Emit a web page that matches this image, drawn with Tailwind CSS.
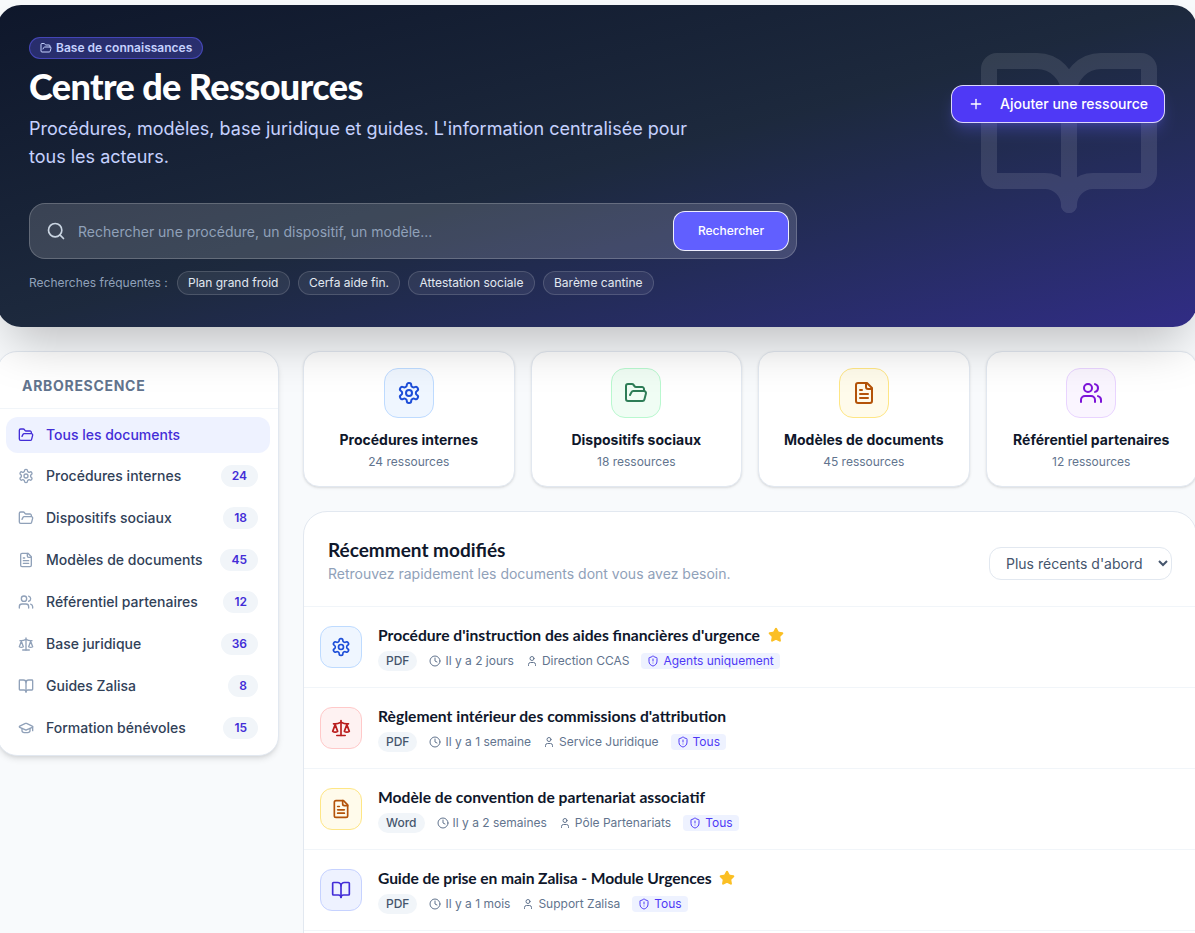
<!DOCTYPE html>
<html lang="fr">
<head>
<meta charset="utf-8">
<title>Centre de Ressources</title>
<script src="https://cdn.jsdelivr.net/npm/@tailwindcss/browser@4"></script>
</head>
<body class="bg-slate-50 font-['Inter',sans-serif] overflow-hidden">
<svg class="hidden">
<symbol id="folder" viewBox="0 0 24 24" fill="none" stroke="currentColor" stroke-width="2" stroke-linecap="round" stroke-linejoin="round"><path d="m6 14 1.5-2.9A2 2 0 0 1 9.24 10H20a2 2 0 0 1 1.94 2.5l-1.54 6a2 2 0 0 1-1.95 1.5H4a2 2 0 0 1-2-2V5a2 2 0 0 1 2-2h3.9a2 2 0 0 1 1.69.9l.81 1.2a2 2 0 0 0 1.67.9H18a2 2 0 0 1 2 2v2"/></symbol>
<symbol id="gear" viewBox="0 0 24 24" fill="none" stroke="currentColor" stroke-width="2" stroke-linecap="round" stroke-linejoin="round"><path d="M12.22 2h-.44a2 2 0 0 0-2 2v.18a2 2 0 0 1-1 1.73l-.43.25a2 2 0 0 1-2 0l-.15-.08a2 2 0 0 0-2.73.73l-.22.38a2 2 0 0 0 .73 2.73l.15.1a2 2 0 0 1 1 1.72v.51a2 2 0 0 1-1 1.74l-.15.09a2 2 0 0 0-.73 2.73l.22.38a2 2 0 0 0 2.73.73l.15-.08a2 2 0 0 1 2 0l.43.25a2 2 0 0 1 1 1.73V20a2 2 0 0 0 2 2h.44a2 2 0 0 0 2-2v-.18a2 2 0 0 1 1-1.73l.43-.25a2 2 0 0 1 2 0l.15.08a2 2 0 0 0 2.73-.73l.22-.39a2 2 0 0 0-.73-2.73l-.15-.08a2 2 0 0 1-1-1.74v-.5a2 2 0 0 1 1-1.74l.15-.09a2 2 0 0 0 .73-2.73l-.22-.38a2 2 0 0 0-2.73-.73l-.15.08a2 2 0 0 1-2 0l-.43-.25a2 2 0 0 1-1-1.73V4a2 2 0 0 0-2-2z"/><circle cx="12" cy="12" r="3"/></symbol>
<symbol id="file" viewBox="0 0 24 24" fill="none" stroke="currentColor" stroke-width="2" stroke-linecap="round" stroke-linejoin="round"><path d="M15 2H6a2 2 0 0 0-2 2v16a2 2 0 0 0 2 2h12a2 2 0 0 0 2-2V7Z"/><path d="M14 2v4a2 2 0 0 0 2 2h4"/><path d="M10 9H8"/><path d="M16 13H8"/><path d="M16 17H8"/></symbol>
<symbol id="users" viewBox="0 0 24 24" fill="none" stroke="currentColor" stroke-width="2" stroke-linecap="round" stroke-linejoin="round"><path d="M16 21v-2a4 4 0 0 0-4-4H6a4 4 0 0 0-4 4v2"/><circle cx="9" cy="7" r="4"/><path d="M22 21v-2a4 4 0 0 0-3-3.87"/><path d="M16 3.13a4 4 0 0 1 0 7.75"/></symbol>
<symbol id="scale" viewBox="0 0 24 24" fill="none" stroke="currentColor" stroke-width="2" stroke-linecap="round" stroke-linejoin="round"><path d="m16 16 3-8 3 8c-.87.65-1.92 1-3 1s-2.13-.35-3-1Z"/><path d="m2 16 3-8 3 8c-.87.65-1.92 1-3 1s-2.13-.35-3-1Z"/><path d="M7 21h10"/><path d="M12 3v18"/><path d="M3 7h2c2 0 5-1 7-2 2 1 5 2 7 2h2"/></symbol>
<symbol id="book" viewBox="0 0 24 24" fill="none" stroke="currentColor" stroke-width="2" stroke-linecap="round" stroke-linejoin="round"><path d="M12 7v14"/><path d="M3 18a1 1 0 0 1-1-1V4a1 1 0 0 1 1-1h5a4 4 0 0 1 4 4 4 4 0 0 1 4-4h5a1 1 0 0 1 1 1v13a1 1 0 0 1-1 1h-6a3 3 0 0 0-3 3 3 3 0 0 0-3-3z"/></symbol>
<symbol id="cap" viewBox="0 0 24 24" fill="none" stroke="currentColor" stroke-width="2" stroke-linecap="round" stroke-linejoin="round"><path d="M21.42 10.922a1 1 0 0 0-.019-1.838L12.83 5.18a2 2 0 0 0-1.66 0L2.6 9.08a1 1 0 0 0 0 1.832l8.57 3.908a2 2 0 0 0 1.66 0z"/><path d="M22 10v6"/><path d="M6 12.5V16a6 3 0 0 0 12 0v-3.5"/></symbol>
<symbol id="clock" viewBox="0 0 24 24" fill="none" stroke="currentColor" stroke-width="2" stroke-linecap="round" stroke-linejoin="round"><circle cx="12" cy="12" r="10"/><polyline points="12 6 12 12 16 14"/></symbol>
<symbol id="user" viewBox="0 0 24 24" fill="none" stroke="currentColor" stroke-width="2" stroke-linecap="round" stroke-linejoin="round"><path d="M19 21v-2a4 4 0 0 0-4-4H9a4 4 0 0 0-4 4v2"/><circle cx="12" cy="7" r="4"/></symbol>
<symbol id="shield" viewBox="0 0 24 24" fill="none" stroke="currentColor" stroke-width="2" stroke-linecap="round" stroke-linejoin="round"><path d="M20 13c0 5-3.5 7.5-7.66 8.95a1 1 0 0 1-.67-.01C7.5 20.5 4 18 4 13V6a1 1 0 0 1 1-1c2 0 4.5-1.2 6.24-2.72a1.17 1.17 0 0 1 1.52 0C14.51 3.81 17 5 19 5a1 1 0 0 1 1 1z"/><path d="M12 8v4"/><path d="M12 16h.01"/></symbol>
<symbol id="star" viewBox="0 0 24 24" fill="currentColor" stroke="currentColor" stroke-width="2" stroke-linecap="round" stroke-linejoin="round"><path d="M11.525 2.295a.53.53 0 0 1 .95 0l2.31 4.679a2.123 2.123 0 0 0 1.595 1.16l5.166.756a.53.53 0 0 1 .294.904l-3.736 3.638a2.123 2.123 0 0 0-.611 1.878l.882 5.14a.53.53 0 0 1-.771.56l-4.618-2.428a2.122 2.122 0 0 0-1.973 0L6.396 21.01a.53.53 0 0 1-.77-.56l.881-5.139a2.122 2.122 0 0 0-.611-1.879L2.16 9.795a.53.53 0 0 1 .294-.906l5.165-.755a2.122 2.122 0 0 0 1.597-1.16z"/></symbol>
</svg>

<div class="w-[1200px] h-[933px] ml-[-3px] pt-[5px] overflow-hidden">
  <!-- Hero -->
  <section class="relative h-[322px] rounded-3xl p-8 bg-linear-to-br from-slate-900 via-slate-800 to-indigo-900 shadow-2xl">
    <div class="absolute inset-0 overflow-hidden rounded-3xl pointer-events-none">
      <svg class="absolute right-8 top-8 w-48 h-48 text-white opacity-10"><use href="#book"/></svg>
    </div>
    <div class="relative flex items-center justify-between">
      <div>
        <span class="flex w-fit items-center gap-1 h-[22px] px-2.5 rounded-full border border-indigo-500/50 bg-indigo-500/30 text-xs font-semibold text-indigo-200"><svg class="w-3 h-3"><use href="#folder"/></svg>Base de connaissances</span>
        <h1 class="mt-[7px] font-['Lato',sans-serif] text-[36px] leading-10 font-black tracking-[-0.6px] text-white">Centre de Ressources</h1>
        <p class="mt-[9px] max-w-2xl text-lg leading-7 text-indigo-200">Procédures, modèles, base juridique et guides. L'information centralisée pour tous les acteurs.</p>
      </div>
      <button class="flex items-center gap-4 h-[38px] px-4 rounded-xl border border-white/80 bg-indigo-600 text-sm font-medium text-white shadow-lg shadow-indigo-500/30"><svg class="w-4 h-4" viewBox="0 0 24 24" fill="none" stroke="currentColor" stroke-width="2" stroke-linecap="round"><path d="M5 12h14"/><path d="M12 5v14"/></svg>Ajouter une ressource</button>
    </div>
    <div class="relative mt-8 flex items-center w-[768px] h-14 rounded-2xl border border-white/20 bg-white/15 pl-4 pr-[7px]">
      <svg class="w-5 h-5 shrink-0 text-slate-300" viewBox="0 0 24 24" fill="none" stroke="currentColor" stroke-width="2" stroke-linecap="round" stroke-linejoin="round"><circle cx="11" cy="11" r="8"/><path d="m21 21-4.3-4.3"/></svg>
      <input class="flex-1 ml-3 pt-0.5 bg-transparent text-sm text-white placeholder-slate-400 outline-none" placeholder="Rechercher une procédure, un dispositif, un modèle...">
      <button class="w-[116px] h-10 rounded-xl border border-white/90 bg-indigo-500 text-xs font-medium text-white">Rechercher</button>
    </div>
    <div class="relative mt-3 flex items-center gap-2 h-6 text-xs">
      <span class="mr-px text-slate-400">Recherches fréquentes :</span>
      <span class="h-6 px-[10.25px] leading-[22px] rounded-full border border-white/15 bg-white/[0.07] text-slate-200">Plan grand froid</span>
      <span class="h-6 px-[10.25px] leading-[22px] rounded-full border border-white/15 bg-white/[0.07] text-slate-200">Cerfa aide fin.</span>
      <span class="h-6 px-[10.25px] leading-[22px] rounded-full border border-white/15 bg-white/[0.07] text-slate-200">Attestation sociale</span>
      <span class="h-6 px-[10.25px] leading-[22px] rounded-full border border-white/15 bg-white/[0.07] text-slate-200">Barème cantine</span>
    </div>
  </section>

  <div class="mt-6 flex items-start gap-6">
    <!-- Sidebar -->
    <aside class="w-[282px] shrink-0 rounded-[20px] border border-slate-200 bg-white shadow-md">
      <h2 class="h-[57px] px-6 pt-6 border-b border-slate-100 text-sm leading-5 font-bold tracking-wider uppercase text-slate-500">Arborescence</h2>
      <nav class="flex flex-col gap-1 p-2 text-sm text-slate-700">
        <a class="flex items-center gap-3 h-9 px-3 rounded-xl bg-indigo-50 font-medium text-indigo-700"><svg class="w-4 h-4 shrink-0"><use href="#folder"/></svg>Tous les documents</a>
        <a class="flex items-center gap-3 h-[38px] px-3 font-medium"><svg class="w-4 h-4 shrink-0 text-slate-400"><use href="#gear"/></svg><span class="flex-1">Procédures internes</span><span class="h-[22px] px-[11px] rounded-full bg-slate-100 text-xs leading-[22px] font-semibold text-indigo-700">24</span></a>
        <a class="flex items-center gap-3 h-[38px] px-3 font-medium"><svg class="w-4 h-4 shrink-0 text-slate-400"><use href="#folder"/></svg><span class="flex-1">Dispositifs sociaux</span><span class="h-[22px] px-[11px] rounded-full bg-slate-100 text-xs leading-[22px] font-semibold text-indigo-700">18</span></a>
        <a class="flex items-center gap-3 h-[38px] px-3 font-medium"><svg class="w-4 h-4 shrink-0 text-slate-400"><use href="#file"/></svg><span class="flex-1">Modèles de documents</span><span class="h-[22px] px-[11px] rounded-full bg-slate-100 text-xs leading-[22px] font-semibold text-indigo-700">45</span></a>
        <a class="flex items-center gap-3 h-[38px] px-3 font-medium"><svg class="w-4 h-4 shrink-0 text-slate-400"><use href="#users"/></svg><span class="flex-1">Référentiel partenaires</span><span class="h-[22px] px-[11px] rounded-full bg-slate-100 text-xs leading-[22px] font-semibold text-indigo-700">12</span></a>
        <a class="flex items-center gap-3 h-[38px] px-3 font-medium"><svg class="w-4 h-4 shrink-0 text-slate-400"><use href="#scale"/></svg><span class="flex-1">Base juridique</span><span class="h-[22px] px-[11px] rounded-full bg-slate-100 text-xs leading-[22px] font-semibold text-indigo-700">36</span></a>
        <a class="flex items-center gap-3 h-[38px] px-3 font-medium"><svg class="w-4 h-4 shrink-0 text-slate-400"><use href="#book"/></svg><span class="flex-1">Guides Zalisa</span><span class="h-[22px] px-[11px] rounded-full bg-slate-100 text-xs leading-[22px] font-semibold text-indigo-700">8</span></a>
        <a class="flex items-center gap-3 h-[38px] px-3 font-medium"><svg class="w-4 h-4 shrink-0 text-slate-400"><use href="#cap"/></svg><span class="flex-1">Formation bénévoles</span><span class="h-[22px] px-[11px] rounded-full bg-slate-100 text-xs leading-[22px] font-semibold text-indigo-700">15</span></a>
      </nav>
    </aside>

    <main class="w-[894px] shrink-0">
      <!-- Category cards -->
      <div class="grid grid-cols-4 gap-4">
        <div class="flex flex-col items-center h-[136px] pt-4 rounded-2xl border border-slate-200 bg-white shadow-sm">
          <div class="flex items-center justify-center w-[50px] h-[50px] rounded-[14px] border border-blue-200 bg-blue-50 text-[#1d4ed8]"><svg class="w-6 h-6"><use href="#gear"/></svg></div>
          <h3 class="mt-3 text-sm font-bold text-slate-900">Procédures internes</h3>
          <p class="mt-1 text-xs text-slate-500">24 ressources</p>
        </div>
        <div class="flex flex-col items-center h-[136px] pt-4 rounded-2xl border border-slate-200 bg-white shadow-sm">
          <div class="flex items-center justify-center w-[50px] h-[50px] rounded-[14px] border border-green-200 bg-green-50 text-[#2e7d57]"><svg class="w-6 h-6"><use href="#folder"/></svg></div>
          <h3 class="mt-3 text-sm font-bold text-slate-900">Dispositifs sociaux</h3>
          <p class="mt-1 text-xs text-slate-500">18 ressources</p>
        </div>
        <div class="flex flex-col items-center h-[136px] pt-4 rounded-2xl border border-slate-200 bg-white shadow-sm">
          <div class="flex items-center justify-center w-[50px] h-[50px] rounded-[14px] border border-amber-200 bg-amber-50 text-[#b45309]"><svg class="w-6 h-6"><use href="#file"/></svg></div>
          <h3 class="mt-3 text-sm font-bold text-slate-900">Modèles de documents</h3>
          <p class="mt-1 text-xs text-slate-500">45 ressources</p>
        </div>
        <div class="flex flex-col items-center h-[136px] pt-4 rounded-2xl border border-slate-200 bg-white shadow-sm">
          <div class="flex items-center justify-center w-[50px] h-[50px] rounded-[14px] border border-purple-200 bg-purple-50 text-[#7c14d8]"><svg class="w-6 h-6"><use href="#users"/></svg></div>
          <h3 class="mt-3 text-sm font-bold text-slate-900">Référentiel partenaires</h3>
          <p class="mt-1 text-xs text-slate-500">12 ressources</p>
        </div>
      </div>

      <!-- Recent list -->
      <section class="mt-6 rounded-3xl border border-slate-200 bg-white">
        <header class="flex items-start justify-between h-[95px] px-6 pt-6 border-b border-slate-100">
          <div>
            <h2 class="font-['Lato',sans-serif] text-[19px] leading-7 font-bold text-slate-900">Récemment modifiés</h2>
            <p class="text-sm text-slate-400">Retrouvez rapidement les documents dont vous avez besoin.</p>
          </div>
          <select class="mt-[11px] w-[183px] h-[33px] pl-3 rounded-xl border border-slate-200 bg-white text-sm text-slate-600"><option>Plus récents d'abord</option></select>
        </header>

        <article class="flex items-center gap-4 h-[81px] px-4 border-b border-slate-100">
          <div class="flex items-center justify-center w-[42px] h-[42px] shrink-0 rounded-xl border border-blue-200 bg-blue-50 text-[#1d4ed8]"><svg class="w-5 h-5"><use href="#gear"/></svg></div>
          <div class="pt-0.5">
            <h3 class="flex items-center gap-2 font-['Lato',sans-serif] text-[15.65px] leading-5 font-bold text-slate-900">Procédure d'instruction des aides financières d'urgence<svg class="w-4 h-4 text-[#fbbf24]"><use href="#star"/></svg></h3>
            <div class="mt-1.5 flex items-center gap-3 text-xs text-slate-500">
              <span class="h-5 px-2 leading-5 rounded-full bg-slate-100 font-medium text-slate-600">PDF</span>
              <span class="flex items-center gap-1"><svg class="w-3 h-3"><use href="#clock"/></svg>Il y a 2 jours</span>
              <span class="flex items-center gap-1"><svg class="w-3 h-3"><use href="#user"/></svg>Direction CCAS</span>
              <span class="flex items-center gap-1 h-4 px-1.5 rounded bg-indigo-50 text-indigo-600"><svg class="w-3 h-3"><use href="#shield"/></svg>Agents uniquement</span>
            </div>
          </div>
        </article>

        <article class="flex items-center gap-4 h-[81px] px-4 border-b border-slate-100">
          <div class="flex items-center justify-center w-[42px] h-[42px] shrink-0 rounded-xl border border-red-200 bg-red-50 text-[#b91c1c]"><svg class="w-5 h-5"><use href="#scale"/></svg></div>
          <div class="pt-0.5">
            <h3 class="flex items-center gap-2 font-['Lato',sans-serif] text-[15.65px] leading-5 font-bold text-slate-900">Règlement intérieur des commissions d'attribution</h3>
            <div class="mt-1.5 flex items-center gap-3 text-xs text-slate-500">
              <span class="h-5 px-2 leading-5 rounded-full bg-slate-100 font-medium text-slate-600">PDF</span>
              <span class="flex items-center gap-1"><svg class="w-3 h-3"><use href="#clock"/></svg>Il y a 1 semaine</span>
              <span class="flex items-center gap-1"><svg class="w-3 h-3"><use href="#user"/></svg>Service Juridique</span>
              <span class="flex items-center gap-1 h-4 px-1.5 rounded bg-indigo-50 text-indigo-600"><svg class="w-3 h-3"><use href="#shield"/></svg>Tous</span>
            </div>
          </div>
        </article>

        <article class="flex items-center gap-4 h-[81px] px-4 border-b border-slate-100">
          <div class="flex items-center justify-center w-[42px] h-[42px] shrink-0 rounded-xl border border-amber-200 bg-amber-50 text-[#b45309]"><svg class="w-5 h-5"><use href="#file"/></svg></div>
          <div class="pt-0.5">
            <h3 class="flex items-center gap-2 font-['Lato',sans-serif] text-[15.65px] leading-5 font-bold text-slate-900">Modèle de convention de partenariat associatif</h3>
            <div class="mt-1.5 flex items-center gap-3 text-xs text-slate-500">
              <span class="h-5 px-2 leading-5 rounded-full bg-slate-100 font-medium text-slate-600">Word</span>
              <span class="flex items-center gap-1"><svg class="w-3 h-3"><use href="#clock"/></svg>Il y a 2 semaines</span>
              <span class="flex items-center gap-1"><svg class="w-3 h-3"><use href="#user"/></svg>Pôle Partenariats</span>
              <span class="flex items-center gap-1 h-4 px-1.5 rounded bg-indigo-50 text-indigo-600"><svg class="w-3 h-3"><use href="#shield"/></svg>Tous</span>
            </div>
          </div>
        </article>

        <article class="flex items-center gap-4 h-[81px] px-4 border-b border-slate-100">
          <div class="flex items-center justify-center w-[42px] h-[42px] shrink-0 rounded-xl border border-indigo-200 bg-indigo-50 text-indigo-700"><svg class="w-5 h-5"><use href="#book"/></svg></div>
          <div class="pt-0.5">
            <h3 class="flex items-center gap-2 font-['Lato',sans-serif] text-[15.65px] leading-5 font-bold tracking-[-0.1px] text-slate-900">Guide de prise en main Zalisa - Module Urgences<svg class="w-4 h-4 text-[#fbbf24]"><use href="#star"/></svg></h3>
            <div class="mt-1.5 flex items-center gap-3 text-xs text-slate-500">
              <span class="h-5 px-2 leading-5 rounded-full bg-slate-100 font-medium text-slate-600">PDF</span>
              <span class="flex items-center gap-1"><svg class="w-3 h-3"><use href="#clock"/></svg>Il y a 1 mois</span>
              <span class="flex items-center gap-1"><svg class="w-3 h-3"><use href="#user"/></svg>Support Zalisa</span>
              <span class="flex items-center gap-1 h-4 px-1.5 rounded bg-indigo-50 text-indigo-600"><svg class="w-3 h-3"><use href="#shield"/></svg>Tous</span>
            </div>
          </div>
        </article>
        <div class="h-10"></div>
      </section>
    </main>
  </div>
</div>
</body>
</html>
